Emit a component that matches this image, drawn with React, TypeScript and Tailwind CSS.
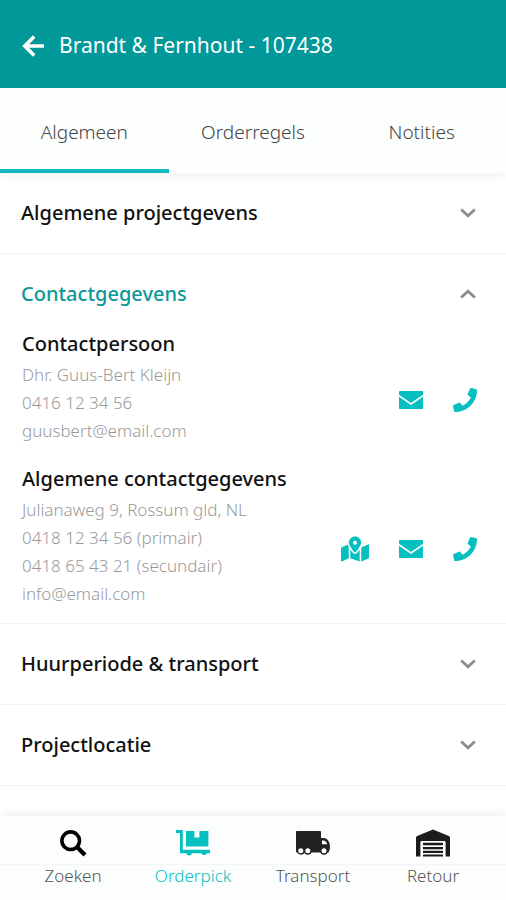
import { useState } from 'react';
import type { ReactNode } from 'react';
import { FaMapMarkedAlt, FaPhone } from 'react-icons/fa';

const tabs = ['Algemeen', 'Orderregels', 'Notities'];

function BackIcon() {
    return (
        <svg viewBox="0 0 22 22" className="size-[22px]" fill="none" stroke="currentColor" strokeWidth="3.6" aria-hidden="true">
            <path d="M12.2 1.6L2.8 11L12.2 20.4M3 11H22" />
        </svg>
    );
}

function MailIcon() {
    return (
        <svg viewBox="0 0 24 18" className="h-[18px] w-6" fill="currentColor" aria-hidden="true">
            <path d="M0.8 0H23.2Q24 0 24 0.8V3.8L12 12L0 3.8V0.8Q0 0 0.8 0Z" />
            <path d="M0 5.7L12 13.9L24 5.7V17.2Q24 18 23.2 18H0.8Q0 18 0 17.2Z" />
        </svg>
    );
}

function Chevron({ open }: { open: boolean }) {
    return (
        <svg viewBox="0 0 16 10" className="h-[10px] w-4 text-[#8c8c8c]" fill="none" stroke="currentColor" strokeWidth="2.8" aria-hidden="true">
            <path d={open ? 'M1.2 8.6L8 2.2L14.8 8.6' : 'M1.2 1.4L8 7.8L14.8 1.4'} />
        </svg>
    );
}

function SearchIcon() {
    return (
        <svg viewBox="0 0 27 27" className="size-[27px] text-black" fill="none" stroke="currentColor" aria-hidden="true">
            <circle cx="10.7" cy="10.7" r="8.8" strokeWidth="3.6" />
            <path d="M16.8 16.8L25 25" strokeWidth="4.4" />
        </svg>
    );
}

function CartIcon() {
    return (
        <svg viewBox="0 0 34 28" className="h-7 w-[34px]" fill="currentColor" aria-hidden="true">
            <path d="M0 1H6.8V20.8H34V24.2H31A3 3 0 0 1 25.4 24.2H16A3 3 0 0 1 10.2 24.2H4V4H0Z" />
            <path d="M10 2H18.4V8.5H23.4V2H32.4V17.6H10Z" />
        </svg>
    );
}

function TruckIcon() {
    return (
        <svg viewBox="0 0 34 26" className="h-[26px] w-[34px]" aria-hidden="true">
            <path d="M0 1.8Q0 1 0.8 1H24.2Q25 1 25 1.8V8H27.5Q31 8.2 33 12Q34 14 34 17Q34 20 32.5 22.4H0.8Q0 22.4 0 21.6Z" fill="#222" />
            <path d="M26 10.4H28Q30.3 11 31.4 14.2H26Z" fill="#fdfdfd" />
            <g fill="#fdfdfd" stroke="#222" strokeWidth="1.4">
                <circle cx="4.8" cy="20.8" r="3.2" />
                <circle cx="11.8" cy="20.8" r="3.2" />
                <circle cx="28" cy="20.8" r="3.2" />
            </g>
        </svg>
    );
}

function GarageIcon() {
    return (
        <svg viewBox="0 0 34 28" className="h-7 w-[34px] text-[#1c1c1c]" fill="currentColor" aria-hidden="true">
            <path d="M0 8.6Q0 7.4 1.2 6.9L17 0.6L32.8 6.9Q34 7.4 34 8.6V27.4H29.6V13.4Q29.6 12 28.2 12H5.8Q4.4 12 4.4 13.4V27.4H0Z" />
            <path d="M7 13.8H27V16.2H7ZM7 18H27V20.2H7ZM7 21.8H27V24H7ZM7 25.4H27V27.4H7Z" />
        </svg>
    );
}

const navItems = [
    { label: 'Zoeken', icon: <SearchIcon /> },
    { label: 'Orderpick', icon: <CartIcon /> },
    { label: 'Transport', icon: <TruckIcon /> },
    { label: 'Retour', icon: <GarageIcon /> },
];

interface SectionProps {
    title: string;
    open: boolean;
    onToggle: () => void;
    children?: ReactNode;
}

function Section({ title, open, onToggle, children }: SectionProps) {
    return (
        <section className="border-b border-[#f4f4f4]">
            <h2>
                <button
                    type="button"
                    aria-expanded={open}
                    onClick={onToggle}
                    className={`flex h-20 w-full items-center justify-between pr-[30px] pl-[21px] text-left text-[20px] font-medium ${open ? 'text-[#0b9897]' : 'text-[#111]'}`}
                >
                    {title}
                    <Chevron open={open} />
                </button>
            </h2>
            {open && children}
        </section>
    );
}

interface ContactProps {
    title: string;
    lines: string[];
    phone: string;
    email: string;
    withMap?: boolean;
}

function Contact({ title, lines, phone, email, withMap }: ContactProps) {
    return (
        <article className="pr-[29px] pl-[22px]">
            <h3 className="text-[20px] leading-[35px] font-medium text-[#111]">{title}</h3>
            <div className="flex items-center justify-between">
                <div className="text-[17px] leading-[28px] font-light text-[#999]">
                    {lines.map((line) => (
                        <p key={line}>{line}</p>
                    ))}
                </div>
                <div className="flex items-center gap-[30px] pb-[6px] text-[#06bfc0]">
                    {withMap && (
                        <a href="#kaart" aria-label="Kaart">
                            <FaMapMarkedAlt size={28} />
                        </a>
                    )}
                    <a href={`mailto:${email}`} aria-label="E-mail">
                        <MailIcon />
                    </a>
                    <a href={`tel:${phone}`} aria-label="Bellen">
                        <FaPhone size={24} />
                    </a>
                </div>
            </div>
        </article>
    );
}

export default function App() {
    const [activeTab, setActiveTab] = useState('Algemeen');
    const [activeNav, setActiveNav] = useState('Orderpick');
    const [openSection, setOpenSection] = useState('Contactgegevens');

    const sectionProps = (title: string) => ({
        title,
        open: openSection === title,
        onToggle: () => setOpenSection(openSection === title ? '' : title),
    });

    return (
        <div className="flex min-h-screen flex-col bg-white font-['Noto_Sans','Open_Sans',sans-serif]">
            <header className="flex h-22 items-center gap-[15px] bg-[#009899] px-[22px] pt-[3px] text-white">
                <button type="button" aria-label="Terug">
                    <BackIcon />
                </button>
                <h1 className="text-[21px]">Brandt &amp; Fernhout - 107438</h1>
            </header>

            <nav className="flex h-[85px] bg-[#fdfefe] shadow-[0_3px_8px_rgba(0,0,0,0.06)]">
                {tabs.map((tab) => (
                    <button
                        key={tab}
                        type="button"
                        onClick={() => setActiveTab(tab)}
                        className={`flex-1 border-b-4 pt-[7px] text-[19px] font-light text-[#444] ${activeTab === tab ? 'border-[#12b8b8]' : 'border-transparent'}`}
                    >
                        {tab}
                    </button>
                ))}
            </nav>

            <main className="flex-1">
                <Section {...sectionProps('Algemene projectgevens')} />
                <Section {...sectionProps('Contactgegevens')}>
                    <div className="-mt-2 flex flex-col gap-4 pb-[15px]">
                        <Contact
                            title="Contactpersoon"
                            lines={['Dhr. Guus-Bert Kleijn', '0416 12 34 56', 'guusbert@email.com']}
                            phone="0416123456"
                            email="guusbert@email.com"
                        />
                        <Contact
                            title="Algemene contactgegevens"
                            lines={['Julianaweg 9, Rossum gld, NL', '0418 12 34 56 (primair)', '0418 65 43 21 (secundair)', 'info@email.com']}
                            phone="0418123456"
                            email="info@email.com"
                            withMap
                        />
                    </div>
                </Section>
                <Section {...sectionProps('Huurperiode & transport')} />
                <Section {...sectionProps('Projectlocatie')} />
            </main>

            <nav className="relative flex h-[84px] bg-[#fcfefe] px-[13px] pt-[13px] shadow-[0_-3px_8px_rgba(0,0,0,0.06)]">
                <span className="pointer-events-none absolute inset-x-0 top-12 h-px bg-[#f3f6f6]" />
                {navItems.map((item) => (
                    <button
                        key={item.label}
                        type="button"
                        onClick={() => setActiveNav(item.label)}
                        className={`flex flex-1 flex-col items-center gap-[6px] text-[17px] font-light ${activeNav === item.label ? 'text-[#06bfc0]' : 'text-[#555]'}`}
                    >
                        <span className="flex h-7 items-center">{item.icon}</span>
                        {item.label}
                    </button>
                ))}
            </nav>
        </div>
    );
}
